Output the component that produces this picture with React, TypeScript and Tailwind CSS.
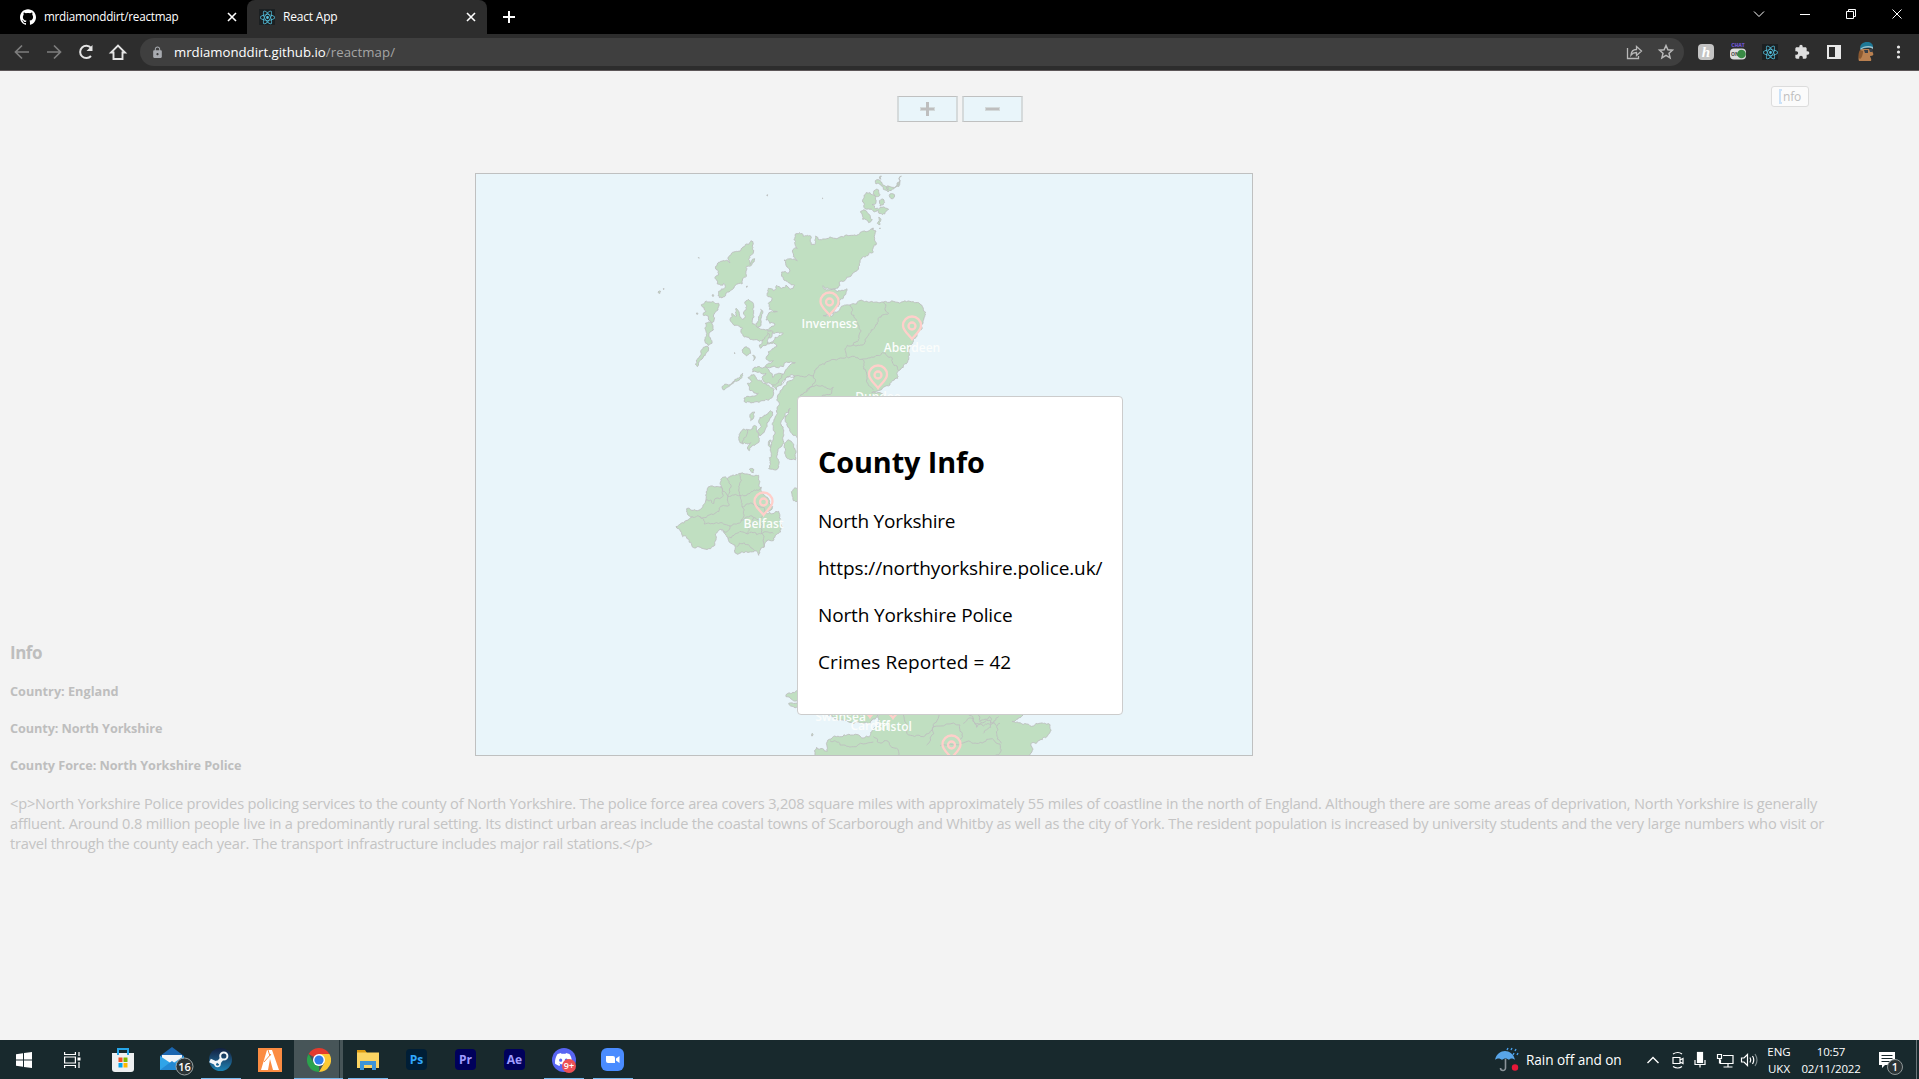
import React from "react";
import { SiDiscord, SiReact, SiGithub } from "react-icons/si";
import { MdExtension, MdLock } from "react-icons/md";

type Pt = [number, number];

function parse(s: string): Pt[] {
  return s
    .trim()
    .split(/\s+/)
    .map((p) => p.split(",").map(Number) as Pt);
}

// Midpoint displacement gives the coastline its ragged edge.
function rough(s: string, closed = true, amount = 0.26): string {
  let seed = s.length * 7 + 3;
  const rnd = () => {
    seed = (seed * 16807) % 2147483647;
    return seed / 2147483647 - 0.5;
  };
  let pts = parse(s);
  for (let k = 0; k < 3; k++) {
    const out: Pt[] = [];
    const n = pts.length;
    for (let i = 0; i < n; i++) {
      out.push(pts[i]);
      if (!closed && i === n - 1) break;
      const [ax, ay] = pts[i];
      const [bx, by] = pts[(i + 1) % n];
      const len = Math.hypot(bx - ax, by - ay);
      if (len < 6) continue;
      const r = rnd() * Math.min(amount * 2, 11 / len);
      out.push([(ax + bx) / 2 - (by - ay) * r, (ay + by) / 2 + (bx - ax) * r]);
    }
    pts = out;
  }
  return "M" + pts.map((p) => p[0].toFixed(1) + "," + p[1].toFixed(1)).join("L") + (closed ? "Z" : "");
}

// Land outlines, in thirds of a pixel from the point (640, 170).
const LAND = [
  // mainland Scotland
  "478,188 490,199 502,196 514,203 514,224 524,224 527,198 545,209 560,206 600,201 640,196 668,184 708,183 704,205 708,225 700,245 680,257 660,272 655,290 620,322 597,338 594,354 575,358 549,347 560,360 592,366 620,356 612,378 598,395 584,420 566,434 550,437 575,439 600,416 630,405 665,390 690,396 730,396 780,400 820,395 836,398 850,415 854,440 845,470 830,500 818,520 805,560 803,572 790,592 776,602 773,625 750,645 715,662 695,668 720,668 735,690 700,720 600,900 480,900 470,800 442,768 436,755 442,735 450,715 438,728 428,748 424,765 430,790 428,805 412,850 417,880 408,900 386,896 390,878 394,850 398,812 405,792 400,770 405,745 412,730 418,700 410,690 425,660 440,640 465,618 440,622 425,645 410,660 398,650 432,612 466,578 440,576 430,590 375,590 400,572 378,565 385,545 410,530 378,520 400,515 405,502 430,490 400,490 380,480 405,462 378,450 385,432 412,425 388,418 385,400 396,385 384,380 385,355 400,362 410,346 425,355 438,345 450,358 464,346 445,338 430,322 425,306 447,308 440,290 432,270 472,272 460,260 457,243 472,235 465,222 465,195",
  // Skye
  "325,388 342,412 342,440 338,462 352,472 372,478 400,486 396,500 372,508 358,514 340,510 318,500 305,490 308,475 296,468 282,466 270,448 276,430 290,438 288,415 298,430 308,448 316,440 312,425 314,400",
  "362,418 368,430 360,470 352,472 348,460 356,440",
  "383,488 388,500 380,525 362,535 358,525 368,510",
  // Mull
  "324,622 345,618 365,632 380,645 402,658 398,680 370,692 340,698 312,694 312,684 345,678 355,670 330,662 322,640 335,635",
  "338,598 372,592 388,604 398,622 428,612 400,645 380,640 366,622 378,610 338,606",
  "246,650 265,645 285,628 308,610 306,622 280,640 262,652 252,660 248,658",
  "312,533 326,534 332,550 320,558 308,548",
  "338,556 346,564 340,572",
  // Lewis and Harris
  "333,212 340,222 340,250 326,268 330,284 344,266 342,276 332,288 318,292 316,322 306,342 286,346 270,364 246,384 234,376 236,364 256,350 252,340 232,342 226,320 236,312 228,298 232,282 256,272 270,278 264,262 290,244 312,230",
  "184,404 210,396 236,400 234,420 220,438 222,450 214,458 206,450 204,438 190,436 198,424",
  "196,460 216,462 220,480 210,486 216,520 204,526 194,510 198,484",
  "190,532 206,534 196,556 182,570 172,590 166,582 178,562 182,545",
  // Orkney
  "672,76 690,68 706,78 708,96 696,104 706,116 726,112 746,118 734,132 712,120 690,118 672,112 668,96",
  "662,124 680,124 690,136 697,150 686,158 668,148",
  "716,142 722,152 720,164 712,160",
  "702,62 716,60 720,74 710,80 700,72",
  "718,92 732,90 730,104 720,108",
  "706,32 722,34 738,50 756,52 778,36 784,18 780,42 762,56 744,66 730,58 722,44 708,42",
  "750,72 764,78 758,86 750,82",
  // Islay and Jura
  "356,756 372,736 392,722 398,726 388,750 372,788 360,798 352,784 364,770",
  "340,768 350,772 356,790 358,812 344,826 328,842 322,834 332,818 308,822 304,812 316,784 332,780",
  "302,786 322,778 318,800 306,820 300,818",
  "330,742 344,726 342,740 332,752",
  "387,812 394,812 392,832 388,830",
  // Arran
  "436,818 450,812 462,824 468,848 466,870 448,868 434,850 432,832",
  "460,958 472,954 474,998 460,992 456,974",
  "328,898 342,900 340,908 332,904",
  // Northern Ireland
  "248,922 262,926 284,918 302,910 322,912 340,918 356,916 360,934 358,950 364,952 366,968 384,984 398,1010 390,1022 376,1030 402,1030 416,1024 418,1044 424,1066 416,1090 400,1112 378,1114 372,1132 356,1156 344,1142 318,1144 290,1152 286,1132 278,1122 264,1106 252,1084 240,1078 226,1092 228,1110 212,1136 190,1136 164,1134 146,1108 128,1100 108,1070 138,1052 158,1040 140,1026 140,1016 172,1022 188,1012 198,990 204,952 228,950 244,952",
  // Pembrokeshire
  "500,1555 470,1562 455,1570 440,1572 438,1580 452,1586 460,1592 476,1596 466,1600 446,1600 452,1608 470,1612 500,1625",
  // South Wales
  "500,1625 540,1628 596,1650 640,1662 676,1658 690,1660 712,1640 700,1600 640,1580 520,1570",
  // Southern England
  "720,1630 770,1625 900,1610 1050,1625 1152,1628 1130,1648 1116,1654 1140,1658 1160,1662 1180,1668 1200,1660 1228,1662 1230,1676 1222,1698 1200,1710 1172,1722 1176,1746 1172,1775 526,1775 530,1732 548,1736 562,1744 568,1708 584,1698 622,1694 660,1698 688,1700 700,1676 716,1658",
];

// Administrative borders inside the land.
const BORDERS = [
  "630,405 634,432 652,458 662,480 658,505 640,525 622,526 618,558",
  "730,396 735,415 746,430 715,445 712,462 690,488 682,500 670,524 640,526",
  "430,640 450,620 490,620 520,618 535,590 570,572 620,560 665,568 705,560 728,548 755,562 758,580 776,602",
  "665,568 670,590 680,612 684,640 700,660",
  "474,690 500,665 530,645 560,655 580,652 575,670 540,690",
  "520,618 522,640 500,665",
  "244,952 262,990 268,1005 240,1012 225,1030 180,1040 158,1042",
  "262,926 268,960 264,980 300,976 306,1010 304,1050 270,1068 262,1084 244,1082",
  "302,910 296,950 300,976 330,970 340,962 364,952",
  "198,990 222,1000 228,985 248,980 240,950",
  "306,1010 340,1004 372,1012 374,1030",
  "180,1040 192,1062 230,1058 270,1068",
  "304,1050 340,1042 360,1050 376,1030",
  "340,1042 330,1070 318,1090 300,1084 282,1096 264,1106",
  "318,1090 350,1094 372,1086 400,1090",
  "360,1050 366,1080 372,1132",
  "290,1130 312,1118 344,1142",
  "570,1712 600,1725 640,1730 700,1716",
  "700,1700 712,1716 740,1712 770,1735 786,1775",
  "790,1634 800,1690 850,1700 880,1670 900,1630",
  "880,1670 872,1710 860,1725",
  "880,1670 960,1665 968,1700 962,1720 900,1728",
  "962,1720 1000,1720 1040,1708 1080,1722 1084,1740 1060,1775",
  "1084,1720 1070,1690 1080,1660",
  "980,1630 1000,1652 1030,1668 1060,1660 1076,1640",
  "1010,1630 1020,1655 1050,1640 1052,1672 1030,1690",
  "970,1660 1000,1645 1010,1672 1040,1650 1070,1668",
];

const DOTS = [
  "380,76 382,78 383,74",
  "546,85 548,86 548,84",
  "54,366 62,364 60,370",
  "70,356 72,355 71,359",
  "175,263 177,265 177,262",
  "168,431 174,430 173,433",
  "282,549 285,551 284,548",
  "718,24 724,18 722,28",
  "740,50 746,48 744,60",
  "774,40 780,38 776,50",
  "695,176 700,174 699,178",
  "718,175 721,174 720,177",
  "318,350 322,348 321,352",
  "216,375 220,374 219,380",
  "515,1692 517,1690 517,1698 515,1698",
];

interface City {
  name: string;
  x: number;
  y: number;
  label?: boolean;
}

const CITIES: City[] = [
  { name: "Inverness", x: 829.5, y: 315, label: true },
  { name: "Aberdeen", x: 912, y: 339, label: true },
  { name: "Dundee", x: 878, y: 388, label: true },
  { name: "Belfast", x: 763.5, y: 515, label: true },
  { name: "Swansea", x: 840.5, y: 708, label: true },
  { name: "Cardiff", x: 870, y: 717, label: true },
  { name: "Bristol", x: 893, y: 718, label: true },
  { name: "Southampton", x: 951.5, y: 758 },
];

function CountyMap() {
  return (
    <svg viewBox="476 174 776 581" className="block h-full w-full">
      <g transform="translate(640 170) scale(0.33333)" stroke="#bdc0bf" strokeWidth={2.8} strokeLinejoin="round">
        <g fill="#c0dfc1">
          {LAND.map((d, i) => (
            <path key={i} d={rough(d)} />
          ))}
          {DOTS.map((d, i) => (
            <path key={i} d={rough(d)} />
          ))}
        </g>
        <g fill="none">
          {BORDERS.map((d, i) => (
            <path key={i} d={rough(d, false)} />
          ))}
        </g>
      </g>
      {CITIES.map((c) => (
        <g key={c.name} transform={`translate(${c.x} ${c.y})`} fill="none" stroke="#ffcfca" strokeWidth={2.3}>
          <path d="M0 0 C-2.500 -4 -9 -8 -9 -13.500 A9 9 0 0 1 9 -13.500 C9 -8 2.500 -4 0 0Z" />
          <circle cx={0} cy={-13} r={3.500} />
        </g>
      ))}
      <g fill="#fbfdfc" fontFamily="Open Sans" fontSize={12} fontWeight={600} textAnchor="middle">
        {CITIES.filter((c) => c.label).map((c) => (
          <text key={c.name} x={c.x} y={c.y + 13}>
            {c.name}
          </text>
        ))}
      </g>
    </svg>
  );
}

function ReactTile({ size }: { size: string }) {
  return (
    <span className={"flex items-center justify-center bg-[#1c2022] text-[#55c4e2] " + size}>
      <SiReact size={15} />
    </span>
  );
}

function Cross() {
  return (
    <svg width="10" height="10" viewBox="0 0 10 10" stroke="#fff" strokeWidth="1.6">
      <path d="M1 1 9 9M9 1 1 9" />
    </svg>
  );
}

function TabStrip() {
  return (
    <div className="flex h-[34px] bg-black text-[12px] text-white">
      <div className="flex w-[247px] items-center pl-5 pr-[10px]">
        <SiGithub size={16} />
        <span className="ml-2 text-[11.700px] tracking-[-0.24px]">mrdiamonddirt/reactmap</span>
        <span className="ml-auto">
          <Cross />
        </span>
      </div>
      <div className="flex w-[240px] items-center rounded-t-lg bg-[#2d2d2d] pl-3 pr-[11px]">
        <ReactTile size="h-4 w-4" />
        <span className="ml-2 tracking-[-0.2px]">React App</span>
        <span className="ml-auto">
          <Cross />
        </span>
      </div>
      <div className="flex w-11 items-center justify-center">
        <svg width="12" height="12" viewBox="0 0 12 12" stroke="#fff" strokeWidth="2">
          <path d="M6 0v12M0 6h12" />
        </svg>
      </div>
      <div className="ml-auto flex h-7 items-center">
        <svg width="184" height="28" viewBox="0 0 184 28" fill="none" stroke="#fff" strokeWidth="1">
          <path d="m19 11.500 5 5 5-5M65 14.500h10M111.500 11.500h7v7h-7zM113.500 11.500v-2h7v7h-2M157.500 9.500l9 9M166.500 9.500l-9 9" />
        </svg>
      </div>
    </div>
  );
}

function Toolbar() {
  return (
    <div className="flex h-[37px] items-center border-b border-[#5c5658] bg-[#2d2d2d]">
      <svg width="140" height="36" viewBox="0 34 140 36" fill="none" stroke="#7d7d7d" strokeWidth="1.700">
        <path d="M29 52H16M22 45.500 15.500 52l6.500 6.500M47 52H60M54 45.500l6.500 6.500-6.500 6.500" />
        <path d="M91 56A6.200 6.200 0 1 1 91 47.800" stroke="#e4e4e4" strokeWidth="2" />
        <path d="M92.500 45v6h-6z" fill="#e4e4e4" stroke="none" />
        <path d="M113.500 59v-6.500H111l7-7 7 7h-2.500V59z" stroke="#e4e4e4" strokeWidth="1.900" />
      </svg>
      <div className="flex h-7 w-[1544px] items-center rounded-full bg-[#3f3f3f] pl-3 pr-[10px] text-[13.200px]">
        <MdLock size={13} className="-ml-px text-[#a8abb0]" />
        <span className="ml-[10px] pt-px tracking-[0px] text-white">mrdiamonddirt.github.io</span>
        <span className="pt-px tracking-[0.1px] text-[#a5a5a5]">/reactmap/</span>
        <svg className="ml-auto" width="48" height="18" viewBox="0 0 48 18" fill="none" stroke="#b8b8b8" strokeWidth="1.300">
          <path d="M1.500 5v10.500h11V13M5 12c.3-4 2.500-5.500 5.500-5.500V3.500L15.500 8l-5 4.500V9.500C8 9.500 6.500 10 5 12Z" />
          <path
            d="m40 2.500 1.900 4.300 4.600.4-3.500 3.100 1.100 4.600-4.100-2.500-4.100 2.500 1.100-4.600-3.500-3.100 4.600-.4z"
            strokeWidth="1.500"
          />
        </svg>
      </div>
      <div className="ml-[14px] flex items-center gap-4">
        <span className="flex h-4 w-4 items-center justify-center rounded-sm bg-[#c3c3c3] font-['Liberation_Serif'] text-[15px] font-bold italic leading-none text-white">
          h
        </span>
        <svg width="16" height="18" viewBox="0 0 16 18">
          <text x="8" y="4" fontSize="5" fontWeight="800" textAnchor="middle" fill="#6a52c8" fontFamily="Open Sans">
            CHAT
          </text>
          <rect x="0" y="5.500" width="16" height="11" rx="4" fill="#dedede" />
          <text x="1" y="13" fontSize="5" fontWeight="700" fill="#444" fontFamily="Open Sans">
            ON
          </text>
          <circle cx="11.500" cy="11" r="4.300" fill="#398a45" />
        </svg>
        <ReactTile size="h-4 w-4" />
        <MdExtension size={16} className="text-[#dedede]" />
        <svg width="16" height="16" viewBox="0 0 16 16" fill="none" stroke="#e8e8e8" strokeWidth="2">
          <path d="M2 2h12v12H2z" />
          <path d="M10 2h4v12h-4z" fill="#e8e8e8" />
        </svg>
        <svg width="16" height="20" viewBox="0 0 16 20">
          <path d="M2 9C1 14 0 16 1 19h12c1-2-1-4-1-5 3 0 4-1 3-3L13 7H4z" fill="#b98050" />
          <path d="M2 8c-2 3-2 8 0 9 2-1 3-5 3-8z" fill="#8c5930" />
          <path d="M2 7C2 2 5 0 9 0c4 0 6 2 6 5z" fill="#1d7896" />
          <path d="M2 7c3-3 9-4 13-2v2C11 5 6 5 3 8z" fill="#9cc3cf" />
          <path d="M6 8h4v3H7zM11 7h4l-1 3h-2z" fill="#38404a" />
        </svg>
        <svg width="16" height="16" viewBox="0 0 16 16" fill="#e8e8e8">
          <circle cx="8.500" cy="3" r="1.600" />
          <circle cx="8.500" cy="8" r="1.600" />
          <circle cx="8.500" cy="13" r="1.600" />
        </svg>
      </div>
    </div>
  );
}

function CountyModal() {
  return (
    <div className="absolute left-[797px] top-[325px] h-[319px] w-[326px] rounded-[4px] border border-[#ccc] bg-white pl-5 text-black">
      <h2 className="mt-[44px] text-[28.800px] font-bold leading-[42px] tracking-[-0.1px]">County Info</h2>
      <div className="mt-[25px] flex flex-col gap-5 whitespace-nowrap text-[19px] leading-[27px]">
        <p className="tracking-[-0.22px]">North Yorkshire</p>
        <p className="tracking-[-0.1px]">https://northyorkshire.police.uk/</p>
        <p className="tracking-[-0.15px]">North Yorkshire Police</p>
        <p className="tracking-[0.09px]">Crimes Reported = 42</p>
      </div>
    </div>
  );
}

function Page() {
  return (
    <main className="relative h-[969px] bg-[#f3f3f3] text-[#bebebe]">
      <div className="flex h-[102px] justify-center gap-1 pt-[25px]">
        <div className="flex h-[26px] w-[61px] items-center justify-center border-x-2 border-y border-x-[#d5dadb] border-y-[#bfc0c0] bg-[#e9f5fa]">
          <svg width="15" height="14" viewBox="0 0 15 14">
            <path d="M0 5h15v4H0z" fill="#d3d9da" />
            <path d="M1 6h13v2H1zM6 0h3v14H6z" fill="#bebebe" />
          </svg>
        </div>
        <div className="flex h-[26px] w-[61px] items-center justify-center border-x-2 border-y border-x-[#d5dadb] border-y-[#bfc0c0] bg-[#e9f5fa]">
          <svg width="15" height="14" viewBox="0 0 15 14">
            <path d="M0 5h15v4H0z" fill="#d3d9da" />
            <path d="M1 6h13v2H1z" fill="#bebebe" />
          </svg>
        </div>
      </div>
      <button className="absolute left-[1771px] top-[15px] flex h-[21px] w-[38px] items-center rounded-[3px] border border-[#dcdcdc] bg-[#fbfbfb] pl-[7px] text-[12px]">
        <span className="h-[15px] w-[3px] border-2 border-r-0 border-[#cbe2f8]" />
        <span className="ml-px pt-px tracking-[-0.2px]">nfo</span>
      </button>
      <div className="ml-[475px] h-[583px] w-[778px] border border-[#bfc0c0] bg-[#e9f5fa]">
        <CountyMap />
      </div>
      <section className="absolute left-[10px] top-[568px] w-[1840px] whitespace-nowrap">
        <h3 className="pt-px text-[17px] font-bold leading-[25px] tracking-[-0.5px]">Info</h3>
        <h5 className="mt-4 text-[12.700px] font-bold leading-5">Country: England</h5>
        <h5 className="mt-[17px] text-[12.700px] font-bold leading-5 tracking-[-0.09px]">County: North Yorkshire</h5>
        <h5 className="mt-[17px] text-[12.700px] font-bold leading-5 tracking-[-0.05px]">
          County Force: North Yorkshire Police
        </h5>
        <div className="mt-[18px] text-[14.600px] leading-5 text-[#c4c4c4]">
          <p className="tracking-[-0.18px]">
            &lt;p&gt;North Yorkshire Police provides policing services to the county of North Yorkshire. The police
            force area covers 3,208 square miles with approximately 55 miles of coastline in the north of England.
            Although there are some areas of deprivation, North Yorkshire is generally
          </p>
          <p className="tracking-[-0.18px]">
            affluent. Around 0.8 million people live in a predominantly rural setting. Its distinct urban areas include
            the coastal towns of Scarborough and Whitby as well as the city of York. The resident population is
            increased by university students and the very large numbers who visit or
          </p>
          <p className="tracking-[-0.2px]">
            travel through the county each year. The transport infrastructure includes major rail stations.&lt;/p&gt;
          </p>
        </div>
      </section>
      <CountyModal />
    </main>
  );
}

function Slot({ children, open, active }: { children: React.ReactNode; open?: boolean; active?: boolean }) {
  return (
    <div className={"relative flex h-full w-[49px] items-center justify-center " + (active ? "bg-[#475558]" : "")}>
      {children}
      {active && <span className="absolute right-[3px] top-0 h-full w-px bg-[#233236]" />}
      {(open || active) && (
        <span className={"absolute bottom-0 h-px bg-[#76b9ed] " + (active ? "w-full" : "w-10")} />
      )}
    </div>
  );
}

function Adobe({ label, color, bg }: { label: string; color: string; bg: string }) {
  return (
    <span className={"flex h-[21px] w-[21px] items-center justify-center rounded-[4px] text-[12px] font-bold leading-none " + color + " " + bg}>
      {label}
    </span>
  );
}

function Taskbar() {
  return (
    <footer className="flex h-[39px] items-center bg-[#18292d] text-white">
      <div className="flex h-full">
        <div className="flex h-full w-12 items-center justify-center">
          <svg width="16" height="16" viewBox="0 0 16 16" fill="#fff">
            <path d="M0 2.200 7 1.200V7.500H0zM8 1l8-1v7.500H8zM0 8.500h7v6.300l-7-1zM8 8.500h8V16l-8-1.100z" />
          </svg>
        </div>
        <div className="mr-[2px] flex h-full w-12 items-center justify-center">
          <svg width="17" height="16" viewBox="0 0 17 16" fill="none" stroke="#fff" strokeWidth="1.200">
            <path d="M.6 0v2.500h10.800V0M.6 16v-2.500h10.800V16M.6 5h10.800v6H.6zM15 0v4M15 10v6" />
            <path d="M13.500 5.500h3v3h-3z" fill="#fff" stroke="none" />
          </svg>
        </div>
        <Slot>
          <svg width="24" height="26" viewBox="0 0 24 26">
            <path d="M7 8V2h10v6" fill="none" stroke="#27a7ea" strokeWidth="2" />
            <path d="M1 6h22v16a3 3 0 0 1-3 3H4a3 3 0 0 1-3-3z" fill="#eef0f1" />
            <path d="M7 6V8M17 6V8" stroke="#27a7ea" strokeWidth="2" />
            <path d="M7.500 10.500h4v4.500h-4z" fill="#f25022" />
            <path d="M12.500 10.500h4v4.500h-4z" fill="#7fba00" />
            <path d="M7.500 16h4v4.500h-4z" fill="#00a4ef" />
            <path d="M12.500 16h4v4.500h-4z" fill="#ffb900" />
          </svg>
        </Slot>
        <Slot>
          <svg width="34" height="34" viewBox="0 0 34 34" className="ml-[10px] mt-1">
            <path d="M0 11 12 2l12 9v14H0z" fill="#1b66b0" />
            <path d="M2 10h20v8H2z" fill="#f2f5f8" />
            <path d="M0 11l12 8 12-8v14H0z" fill="#2fa4e8" />
            <path d="M0 25 12 16l12 9z" fill="#2389d3" />
            <circle cx="24.500" cy="21.500" r="8.500" fill="#2b3436" stroke="#9ea5a6" />
            <text x="24.500" y="25.500" fontSize="11" fontWeight="600" textAnchor="middle" fill="#fff" fontFamily="Open Sans">
              16
            </text>
          </svg>
        </Slot>
        <Slot open>
          <span className="flex h-[23px] w-[23px] items-center justify-center rounded-full bg-gradient-to-b from-[#12203f] to-[#1a82b4]">
            <svg width="23" height="23" viewBox="0 0 23 23" fill="none" stroke="#f3f6f8">
              <circle cx="14.800" cy="8" r="3.600" strokeWidth="2" />
              <path d="M12.500 11 9 15.500" strokeWidth="4" />
              <path d="M1 12.500 7.500 15.500" strokeWidth="4" />
              <circle cx="8.500" cy="15.800" r="2.600" strokeWidth="1.500" />
            </svg>
          </span>
        </Slot>
        <Slot>
          <svg width="24" height="24" viewBox="0 0 24 24">
            <path d="M0 0h24v24H0z" fill="#fb8c42" />
            <path d="M9 2h5l7 20h-6l-3-11-2 11H3z" fill="#fff" />
            <path d="m6 14 7-8M10 2l2 6" stroke="#fb8c42" />
          </svg>
        </Slot>
        <Slot active>
          <svg width="24" height="24" viewBox="0 0 24 24">
            <path d="M12 12 1.600 6A12 12 0 0 1 22.400 6z" fill="#e33b2e" />
            <path d="M12 12 12 24A12 12 0 0 1 1.600 6l5.200 9z" fill="#2ba24c" />
            <path d="M17.200 15 12 24A12 12 0 0 0 22.400 6H12z" fill="#fcc934" />
            <circle cx="12" cy="12" r="6" fill="#fff" />
            <circle cx="12" cy="12" r="4.600" fill="#2f7de9" />
          </svg>
        </Slot>
        <Slot open>
          <svg width="22" height="20" viewBox="0 0 22 20">
            <path d="M0 0h8l2 3H0z" fill="#dd9b12" />
            <path d="M0 2.500h22V18H0z" fill="#fcd462" />
            <path d="M3 20v-9h16v9h-4v-5H7v5z" fill="#3d94d8" />
          </svg>
        </Slot>
        <Slot>
          <Adobe label="Ps" color="text-[#31a8ff]" bg="bg-[#001e36]" />
        </Slot>
        <Slot>
          <Adobe label="Pr" color="text-[#9f9bff]" bg="bg-[#00005b]" />
        </Slot>
        <Slot>
          <Adobe label="Ae" color="text-[#9f9bff]" bg="bg-[#00005b]" />
        </Slot>
        <Slot open>
          <span className="flex h-6 w-6 items-center justify-center rounded-full bg-[#5865f2]">
            <SiDiscord size={17} />
          </span>
          <span className="absolute left-[23px] top-[19px] flex h-[14px] w-[14px] items-center justify-center rounded-full bg-[#ed4f55] text-[9px] font-semibold">
            9+
          </span>
        </Slot>
        <Slot open>
          <svg width="23" height="23" viewBox="0 0 23 23">
            <rect width="23" height="23" rx="6" fill="#4a8cff" />
            <path d="M5 8h7a2 2 0 0 1 2 2v5H7a2 2 0 0 1-2-2zM15 10.500l3.500-2.500v7L15 12.500z" fill="#fff" />
          </svg>
        </Slot>
      </div>
      <div className="ml-auto flex h-full items-center">
        <svg width="25" height="25" viewBox="0 0 25 25">
          <path d="M0 13C1 7 6 4 10 4s9 3 10 9c-2-2-5-2-6 0-2-2-5-2-7 0-2-2-5-2-7 0z" fill="#58a5e8" />
          <path d="M10.500 12v9a2.500 2.500 0 0 1-5 0" fill="none" stroke="#8b949a" strokeWidth="1.600" />
          <path d="m13 1-1 2M17 1l-1 2M21 2l-1 2M19 6l-1 2M23 6l-1 2" stroke="#4aa0ea" strokeWidth="1.400" />
          <circle cx="20" cy="20.500" r="3.200" fill="#e81838" />
        </svg>
        <span className="ml-[6px] w-[120px] whitespace-nowrap pt-px text-[13.600px] tracking-[-0.05px]">Rain off and on</span>
        <svg width="120" height="24" viewBox="1646 1048 120 24" fill="none" stroke="#fff" strokeWidth="1.200">
          <path d="m1647.500 1063 5.500-5.500 5.500 5.500" strokeWidth="1.400" />
          <path d="M1673 1057.500h7v6h-7zM1680 1060l3-1.500v5l-3-1.500M1673 1054q5-3 9 0M1673 1066.500q5 3 9 0" />
          <rect x="1697.500" y="1052.500" width="5" height="10" fill="#fff" />
          <path d="M1695 1060v4.500h10V1060M1700 1064.500v3" />
          <path d="M1723 1055.500h10v8h-12.500v-4M1728 1063.500v3.500M1723.500 1067h9M1717.500 1054.500h4v4h-4zM1719.500 1058.500v5" />
          <path d="M1741.500 1058h2.500l3.500-3.500v11l-3.500-3.500h-2.500zM1750 1057.500q1.500 2.500 0 5M1752.500 1056q2.500 4 0 8" />
          <path d="M1755 1054q4 6 0 12" stroke="#7d898b" />
        </svg>
        <div className="w-[26px] text-center text-[11.500px] leading-[17px]">
          <div>ENG</div>
          <div>UKX</div>
        </div>
        <div className="w-[78px] text-center text-[11.500px] leading-[17px] tracking-[-0.2px]">
          <div>10:57</div>
          <div>02/11/2022</div>
        </div>
        <svg width="46" height="30" viewBox="1870 1045 46 30">
          <path d="M1879 1052h16v13h-10l-3 3v-3h-3z" fill="#fff" />
          <path d="M1881.500 1055.500h11M1881.500 1058.500h11M1881.500 1061.500h8" stroke="#18292d" />
          <circle cx="1895" cy="1067" r="7.500" fill="#2b3436" stroke="#8f9798" />
          <text x="1895" y="1071" fontSize="11" fontWeight="600" textAnchor="middle" fill="#fff" fontFamily="Open Sans">
            1
          </text>
        </svg>
        <span className="mr-[2px] h-full w-px bg-[#6b777a]" />
      </div>
    </footer>
  );
}

export default function App() {
  return (
    <div className="h-[1079px] w-[1919px] overflow-hidden font-['Open_Sans','Noto_Sans',sans-serif]">
      <TabStrip />
      <Toolbar />
      <Page />
      <Taskbar />
    </div>
  );
}
